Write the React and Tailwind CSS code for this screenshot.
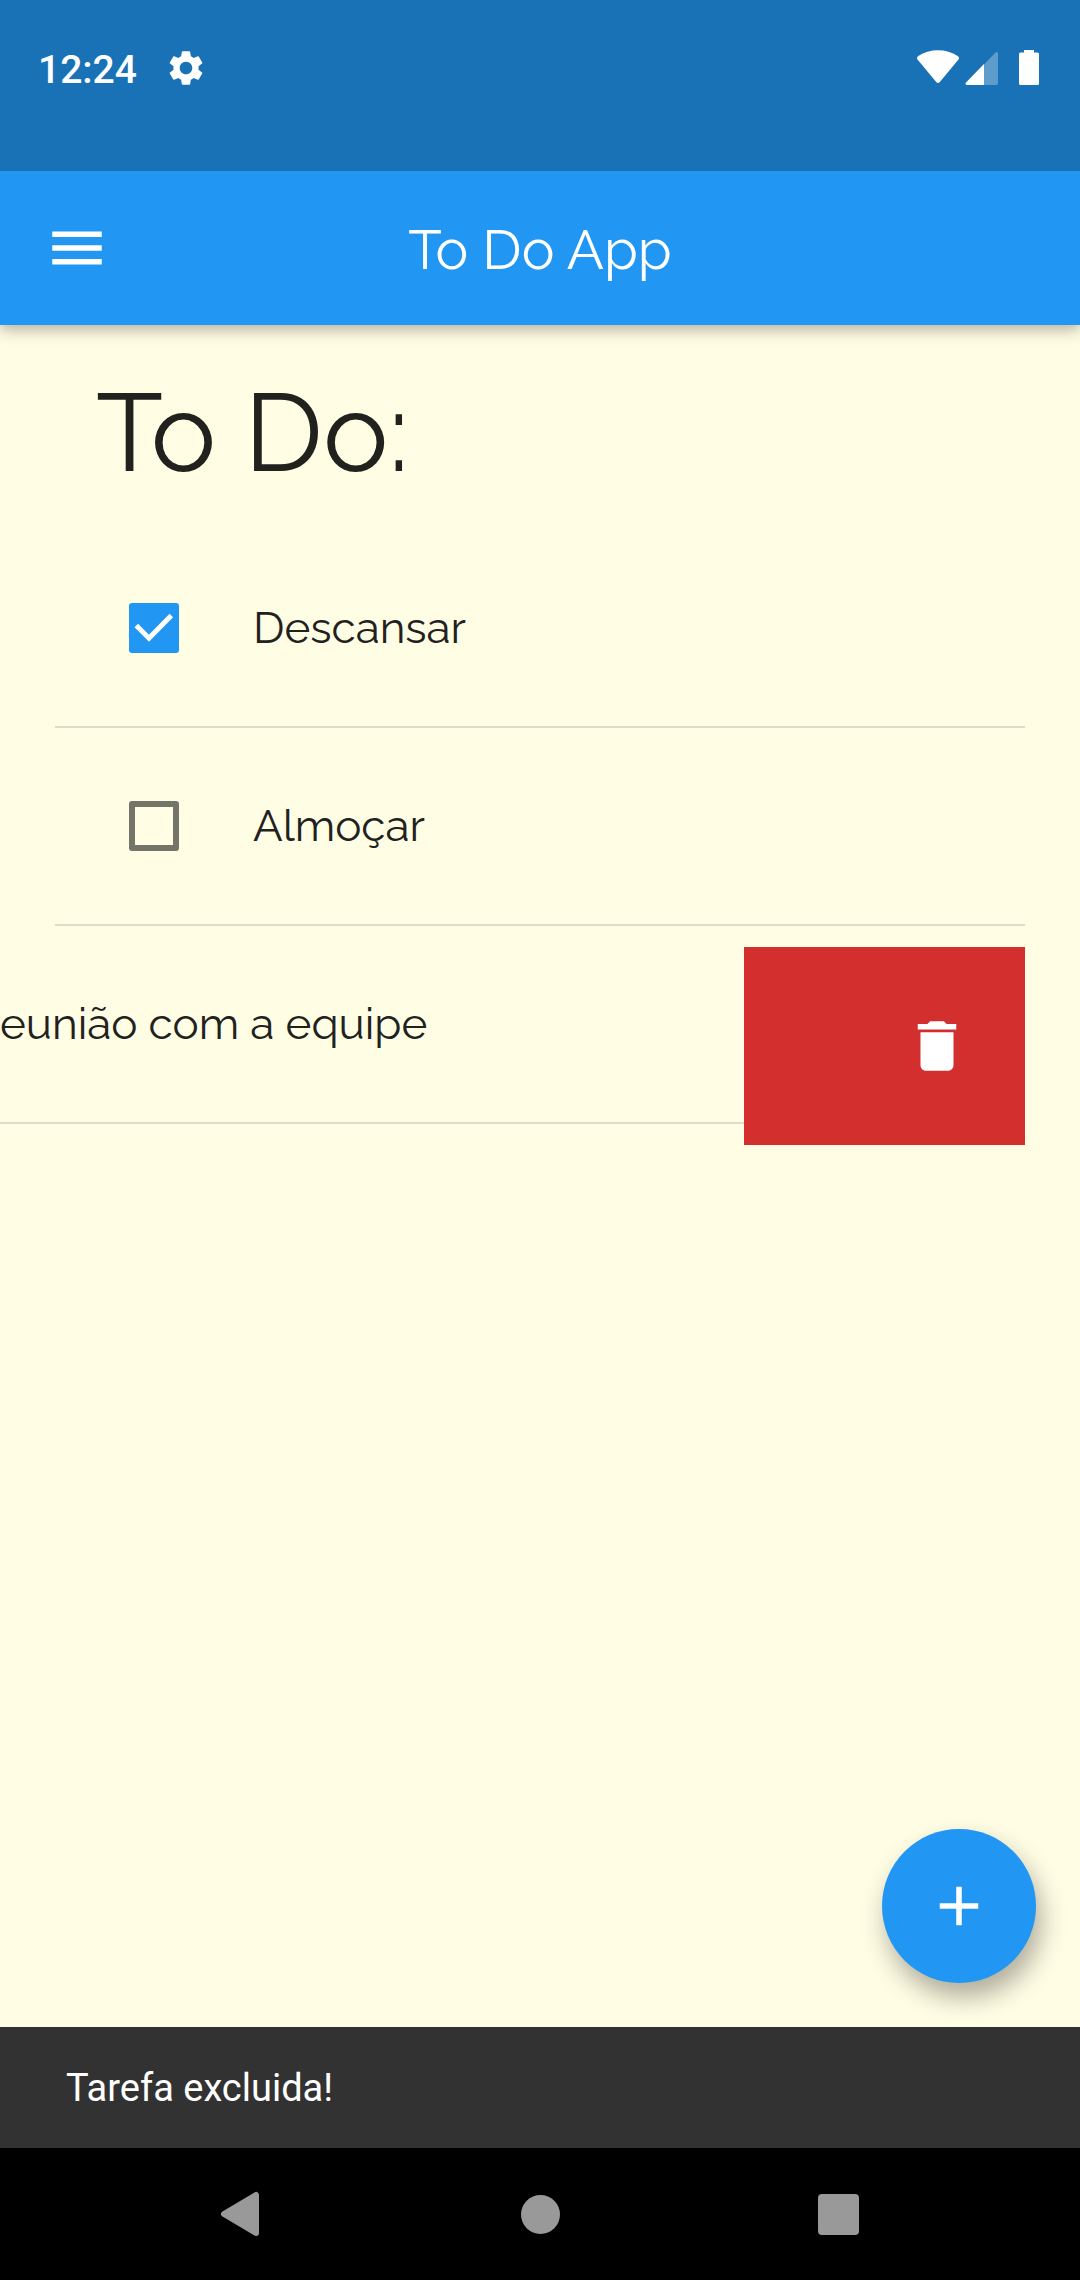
import { MdAdd, MdDelete, MdMenu, MdSettings } from "react-icons/md";

const tasks = [
  { id: "descansar", title: "Descansar", done: true },
  { id: "almocar", title: "Almoçar", done: false },
  { id: "reuniao", title: "Reunião com a equipe", done: false, swiped: true },
];

function StatusBar() {
  return (
    <div className="relative z-20 h-[171px] bg-[#1971b6] text-white">
      <div className="flex h-[136px] items-center justify-between pr-10 pl-[38px]">
        <div className="flex items-center gap-7">
          <time className="pt-1 font-[Roboto,sans-serif] text-[39px] leading-[46px] font-medium">12:24</time>
          <MdSettings className="size-[42px]" aria-hidden="true" />
        </div>
        <div className="flex items-center">
          <svg className="h-9 w-[43px]" viewBox="0 0 43 36" fill="currentColor" aria-hidden="true">
            <path d="M.500 9.500Q-.8 7.500 1.300 6Q10 .3 21 .3Q32 .3 40.700 6Q42.800 7.500 41.500 9.500L22.800 32Q21 33.800 19.200 32Z" />
          </svg>
          <svg className="ml-[5px] h-9 w-[34px]" viewBox="0 0 34 36" aria-hidden="true">
            <path d="M19 14.500L30.500 2.500Q33 .8 33 4V33Q33 35 31 35H19Z" fill="#fff" fillOpacity=".3" />
            <path d="M19 14V35H2Q-.5 34.500 1 32.500Z" fill="#fff" />
          </svg>
          <svg className="ml-5 h-9 w-[21px]" viewBox="0 0 21 36" fill="currentColor" aria-hidden="true">
            <path d="M5 0H15V2.500H18.500Q20 2.500 20 4V33.500Q20 35 18.500 35H1.500Q0 35 0 33.500V4Q0 2.500 1.500 2.500H5Z" />
          </svg>
        </div>
      </div>
    </div>
  );
}

function AppBar() {
  return (
    <header className="relative z-10 grid h-[154px] grid-cols-[154px_1fr_154px] items-center bg-[#2196f3] text-white shadow-[0_6px_14px_rgba(0,0,0,0.24),0_2px_10px_rgba(0,0,0,0.06)]">
      <button type="button" aria-label="Menu" className="grid h-full place-items-center">
        <MdMenu className="size-[66px]" />
      </button>
      <div className="pt-1 text-center text-[55px] leading-[66px]">To Do App</div>
    </header>
  );
}

function TaskTile({ task }) {
  return (
    <div className="w-full shrink-0">
      <div className="flex h-[154px] items-center gap-11 px-11">
        <span className="grid w-[110px] place-items-center">
          <input
            id={task.id}
            type="checkbox"
            defaultChecked={task.done}
            className="peer col-start-1 row-start-1 size-[50px] appearance-none rounded-[3px] border-[6px] border-[#757469] checked:border-[#2196f3] checked:bg-[#2196f3]"
          />
          <svg
            viewBox="0 0 50 50"
            className="pointer-events-none invisible col-start-1 row-start-1 size-[50px] peer-checked:visible"
            fill="none"
            stroke="#fff"
            strokeWidth="5"
            aria-hidden="true"
          >
            <path d="M7.300 22.500L20 35.200L42.300 12.500" />
          </svg>
        </span>
        <label htmlFor={task.id} className="text-[44px] leading-[52px] whitespace-nowrap">
          {task.title}
        </label>
      </div>
      <hr className="my-[21px] border-t-2 border-[#dedcc8]" />
    </div>
  );
}

function TaskRow({ task }) {
  if (!task.swiped) {
    return (
      <li className="flex">
        <TaskTile task={task} />
      </li>
    );
  }
  return (
    <li className="-ml-[281px] flex w-[calc(100%+281px)]">
      <div className="flex min-w-0 flex-1">
        <TaskTile task={task} />
      </div>
      <button
        type="button"
        aria-label="Excluir tarefa"
        className="flex w-[281px] items-center justify-end bg-[#d32f2f] pr-[55px] text-white"
      >
        <MdDelete className="size-[66px]" />
      </button>
    </li>
  );
}

function NavBar() {
  return (
    <nav className="flex h-[132px] items-center justify-evenly bg-black text-[#999999]">
      <button type="button" aria-label="Voltar" className="grid h-full w-28 place-items-center">
        <svg className="h-[46px] w-[42px]" viewBox="0 0 42 46" fill="currentColor" stroke="currentColor" strokeWidth="6" strokeLinejoin="round">
          <path d="M3 23L35 4V42Z" />
        </svg>
      </button>
      <button type="button" aria-label="Início" className="grid h-full w-28 place-items-center">
        <span className="size-[39px] rounded-full bg-[#999999]" />
      </button>
      <button type="button" aria-label="Recentes" className="grid h-full w-28 place-items-center">
        <span className="size-[41px] rounded-[4px] bg-[#999999]" />
      </button>
    </nav>
  );
}

export default function App() {
  return (
    <div className="flex min-h-screen flex-col overflow-hidden bg-[#fffde4] font-[Raleway,Lato,sans-serif] text-[#21211e]">
      <StatusBar />
      <AppBar />
      <main className="relative flex-1 px-[55px]">
        <h1 className="px-[41px] pt-[42px] pb-[52px] text-[110px] leading-[132px]">To Do:</h1>
        <ul>
          {tasks.map((task) => (
            <TaskRow key={task.id} task={task} />
          ))}
        </ul>
        <button
          type="button"
          aria-label="Adicionar tarefa"
          className="absolute right-11 bottom-11 grid size-[154px] place-items-center rounded-full bg-[#2196f3] text-white shadow-[5px_14px_26px_rgba(0,0,0,0.32)]"
        >
          <MdAdd className="size-[66px]" />
        </button>
      </main>
      <div role="status" className="relative bg-[#323232] px-[66px] pt-[38px] pb-9 font-[Roboto,sans-serif] text-[38px] leading-[47px] text-white">
        Tarefa excluida!
      </div>
      <NavBar />
    </div>
  );
}
